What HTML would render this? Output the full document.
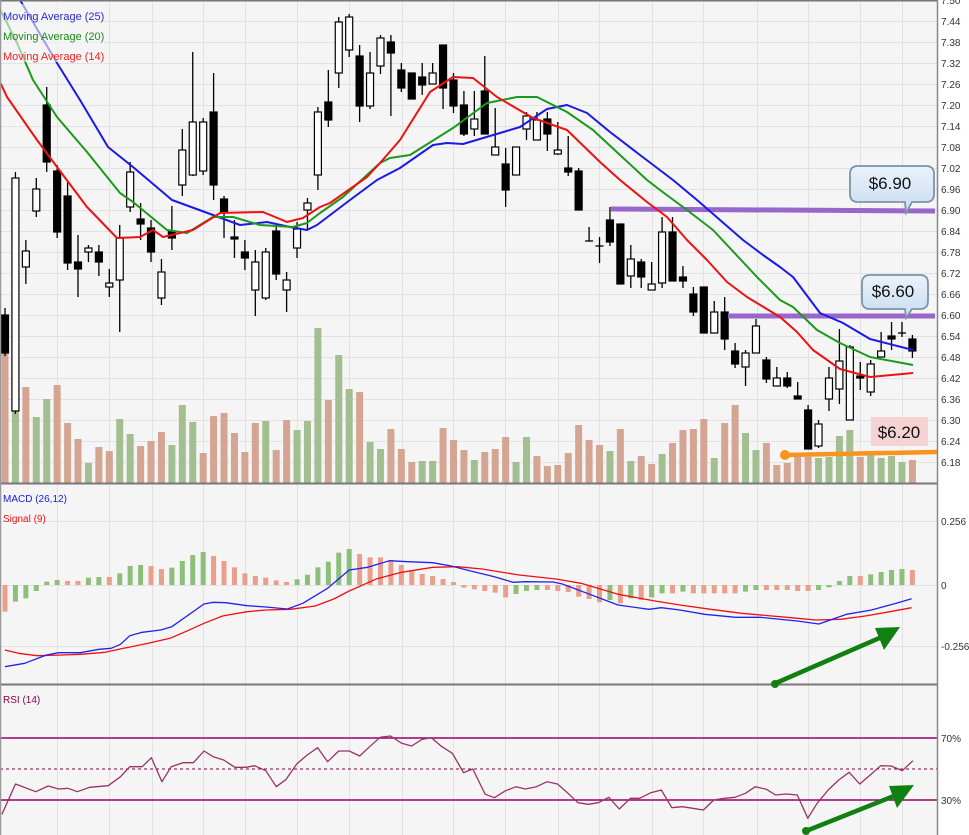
<!DOCTYPE html>
<html><head><meta charset="utf-8"><style>
html,body{margin:0;padding:0;background:#fff;}
svg{display:block;font-family:"Liberation Sans",sans-serif;}
</style></head><body>
<svg id="s" width="969" height="835" viewBox="0 0 969 835" xmlns="http://www.w3.org/2000/svg">
<defs>
<linearGradient id="cb" x1="0" y1="0" x2="0" y2="1"><stop offset="0" stop-color="#eaf2fb"/><stop offset="1" stop-color="#c9dcef"/></linearGradient>
</defs>
<rect x="0" y="0" width="969" height="835" fill="#ffffff"/>
<rect x="0" y="0" width="937" height="835" fill="#f5f5f5"/>
<g id="grid" stroke="#e2e2e2" stroke-width="1"></g>
<g id="vol"></g>
<g id="cand"></g>
<g id="ma" fill="none" stroke-width="2" stroke-linejoin="round"></g>
<g id="macd"></g>
<g id="rsi"></g>
<g id="lbl" font-size="10" fill="#333"></g>
</svg>
<script>
var NS="http://www.w3.org/2000/svg";
function el(p,t,a,txt){var e=document.createElementNS(NS,t);for(var k in a)e.setAttribute(k,a[k]);if(txt!=null)e.textContent=txt;document.getElementById(p).appendChild(e);return e;}
function X(i){return 5+i*10.43;}
var vx=[57,109,152,203,245,297,349,402,453,505,558,599,652,703,757,808,860,902];
vx.forEach(function(x){el('grid','line',{x1:x+.5,y1:0,x2:x+.5,y2:835});});
for(var k=0;k<=22;k++){var yy=462-k*21;el('grid','line',{x1:0,y1:yy+.5,x2:937,y2:yy+.5});
 var p=(6.18+k*0.06).toFixed(2);el('lbl','text',{x:941,y:yy+4},p);}
[521,585,646].forEach(function(y){el('grid','line',{x1:0,y1:y+.5,x2:937,y2:y+.5});});
var vt=[353,410,387,417,399,385,423,439,463,447,451,419,434,446,441,432,445,405,422,453,416,413,433,452,423,421,450,420,430,421,328,400,355,389,392,442,449,429,449,462,461,461,428,440,450,460,
452,449,437,462,437,456,466,465,453,425,440,445,451,429,461,456,464,454,443,430,429,419,458,423,405,433,450,443,465,463,457,457,458,457,436,430,457,455,458,456,462,460];
var vg=[0,1,0,1,1,0,0,0,1,0,0,1,1,0,0,0,1,1,1,0,0,0,0,0,0,1,0,0,1,1,1,0,1,1,0,1,1,0,0,0,1,1,0,0,0,1,
0,0,0,1,1,0,0,0,0,0,0,0,1,0,1,0,0,1,0,0,0,0,1,0,0,1,1,0,0,0,0,0,1,1,1,1,0,1,1,1,1,0];
for(var i=0;i<vt.length;i++){el('vol','rect',{x:X(i)-3.5,y:vt[i],width:7,height:483-vt[i],fill:vg[i]?'#a3bf92':'#d4a592'});}
var C=[[315,353,308,356,1],[178,411,172,414,0],[251,267,240,284,0],[189,211,178,217,0],[105,162,87,172,1],[171,232,165,238,1],[196,263,182,270,1],[262,269,235,297,1],[248,252,245,262,0],[252,262,245,276,1],
[283,287,269,297,0],[238,280,225,332,0],[172,207,162,212,0],[219,224,203,240,1],[228,252,220,262,1],[272,298,259,305,0],[231,238,206,250,1],[150,185,129,196,0],[122,175,52,176,0],[122,171,118,175,0],
[112,185,73,200,1],[199,212,196,238,1],[237,239,220,258,1],[252,258,240,270,1],[262,290,250,316,0],[252,298,248,300,0],[231,274,226,280,1],[280,290,272,312,0],[229,248,222,258,0],[203,210,198,230,0],
[112,175,107,190,0],[102,120,70,127,1],[22,73,17,88,0],[17,50,14,57,0],[56,106,45,122,1],[73,106,52,109,0],[38,66,35,74,0],[42,53,35,116,1],[70,88,63,92,1],[73,99,73,99,1],
[77,85,63,95,1],[73,84,63,84,0],[45,88,45,109,1],[80,106,73,113,1],[105,134,91,136,1],[119,129,91,136,0],[91,134,56,134,1],[147,155,108,155,0],[164,190,148,207,1],[147,175,147,175,0],
[116,129,112,140,0],[120,140,112,140,0],[119,134,112,151,1],[150,154,122,155,0],[168,172,136,176,1],[171,210,168,210,1],[241,241,227,241,2],[246,246,237,263,2],[220,242,207,246,1],[224,284,224,284,1],
[259,276,245,288,0],[262,277,259,288,1],[284,290,262,290,0],[232,283,217,288,0],[232,281,217,281,1],[277,281,266,288,1],[294,312,287,316,1],[287,333,287,333,1],[312,333,301,333,0],[312,339,297,350,1],
[351,364,343,368,1],[353,367,350,386,0],[326,353,319,353,0],[360,379,357,383,1],[378,386,367,386,0],[378,386,372,388,1],[396,399,382,399,1],[410,449,405,449,1],[424,446,420,448,0],[378,399,367,411,0],
[361,389,329,404,0],[347,420,345,420,0],[376,378,362,390,1],[364,392,360,396,0],[351,357,332,357,0],[336,339,322,350,1],[333,333,322,337,2],[339,351,335,358,1]];
for(var i=0;i<C.length;i++){var c=C[i],x=X(i);
 el('cand','line',{x1:x,y1:c[2],x2:x,y2:c[3],stroke:'#000','stroke-width':1.3});
 if(c[4]==2){el('cand','line',{x1:x-4,y1:c[0],x2:x+4,y2:c[0],stroke:'#000','stroke-width':1.3});}
 else el('cand','rect',{x:x-3.5,y:c[0],width:7,height:Math.max(2,c[1]-c[0]),fill:c[4]?'#000':'#fff',stroke:'#000','stroke-width':1.2});}
function pl(g,pts,col,w){var s=pts.map(function(p){return p[0]+','+p[1]}).join(' ');return el(g,'polyline',{points:s,stroke:col,'stroke-width':w,fill:'none','stroke-linejoin':'round'});}
pl('ma',[[20,0],[57,63],[80,100],[108,147],[133,167],[172,200],[213,215],[240,225],[267,222],[290,227],[307,230],[317,225],[350,200],[377,180],[400,168],[433,145],[447,143],[463,144],[500,133],[520,127],[547,109],[567,105],[587,113],[610,132],[640,155],[673,180],[697,200],[743,240],[763,255],[780,267],[793,277],[820,313],[843,323],[870,339],[913,350]],'#1a1ae6',2);
pl('ma',[[0,10],[3,15],[17,43],[33,80],[57,117],[87,152],[120,193],[133,202],[167,230],[187,233],[213,217],[233,217],[260,225],[293,227],[307,223],[320,213],[343,197],[380,163],[390,158],[410,155],[453,128],[487,103],[517,97],[537,97],[567,112],[593,130],[620,155],[647,180],[660,190],[687,210],[713,230],[757,277],[780,300],[793,307],[817,330],[840,343],[870,357],[913,365]],'#1a9a1a',2);
pl('ma',[[0,82],[7,97],[37,140],[57,167],[87,207],[117,238],[140,237],[153,230],[163,237],[193,230],[220,213],[263,212],[287,222],[303,218],[320,207],[330,203],[367,177],[380,163],[400,140],[430,92],[453,77],[473,78],[497,97],[533,118],[567,130],[600,162],[620,180],[647,202],[667,217],[687,240],[707,260],[727,282],[747,297],[780,317],[797,332],[813,350],[840,369],[870,377],[913,373]],'#ee1111',2);
el('ma','rect',{x:0,y:4,width:104,height:58,fill:'#f5f5f5','fill-opacity':0.6,stroke:'none'});
el('lbl','text',{x:3,y:20,'font-size':11,fill:'#2a2ad0'},'Moving Average (25)');
el('lbl','text',{x:3,y:40,'font-size':11,fill:'#1a8a1a'},'Moving Average (20)');
el('lbl','text',{x:3,y:60,'font-size':11,fill:'#ee2222'},'Moving Average (14)');
el('cand','line',{x1:611,y1:209,x2:935,y2:211,stroke:'#9966cc','stroke-width':5});
el('cand','line',{x1:728,y1:316,x2:935,y2:316,stroke:'#9966cc','stroke-width':5});
el('cand','line',{x1:785,y1:455,x2:937,y2:452,stroke:'#f7941d','stroke-width':4.5});
el('cand','circle',{cx:785,cy:455,r:5,fill:'#f7941d'});
el('cand','path',{d:'M858,166 H926 Q934,166 934,174 V194 Q934,202 926,202 H912 L906,213 L905,202 H858 Q850,202 850,194 V174 Q850,166 858,166Z',fill:'url(#cb)',stroke:'#7d93a8','stroke-width':1.8});
el('lbl','text',{x:890,y:189,'font-size':17,fill:'#111','text-anchor':'middle'},'$6.90');
el('cand','path',{d:'M870,275 H920 Q928,275 928,283 V301 Q928,309 920,309 H912 L906,318 L905,309 H870 Q862,309 862,301 V283 Q862,275 870,275Z',fill:'url(#cb)',stroke:'#7d93a8','stroke-width':1.8});
el('lbl','text',{x:893,y:297,'font-size':17,fill:'#111','text-anchor':'middle'},'$6.60');
el('cand','rect',{x:871,y:417,width:57,height:29,fill:'#f6d3d3'});
el('lbl','text',{x:899,y:438,'font-size':17,fill:'#111','text-anchor':'middle'},'$6.20');
var hz=[395,365,355,333,305,300,303,303,293,291,291,280,258,255,258,267,263,243,225,216,228,243,262,280,288,293,301,306,298,284,262,245,218,207,222,232,232,243,255,270,282,288,297,306,323,328,333,338,352,342,333,330,330,333,336,350,357,367,360,370,355,360,352,340,340,335,340,340,340,340,340,335,330,330,330,330,333,333,330,322,303,288,288,283,276,270,267,270];
for(var i=0;i<hz.length;i++){var by=480+hz[i]/3,bx=X(i);var prv=i?480+hz[i-1]/3:585;var gg=(by<prv);var yt=Math.min(by,585),hh=Math.abs(by-585);
 el('macd','rect',{x:bx-2.5,y:yt,width:5,height:Math.max(hh,1),fill:gg?'#8cc07a':'#e8a08c'});}
function tz(a){return a.map(function(p){return [(p[0]/1.618).toFixed(1),(480+p[1]/3).toFixed(1)];});}
pl('macd',tz([[8,510],[30,520],[60,527],[100,525],[130,523],[170,517],[200,505],[240,490],[275,475],[300,455],[330,430],[360,408],[400,395],[430,390],[470,388],[510,378],[540,357],[565,333],[610,296],[650,277],[700,262],[740,260],[780,267],[840,285],[900,297],[940,310],[1000,343],[1060,363],[1100,375],[1150,388],[1200,400],[1280,413],[1320,420],[1360,418],[1400,408],[1440,395],[1475,383]]),'#ee1111',1.3);
pl('macd',tz([[8,560],[40,550],[75,525],[95,518],[130,518],[160,508],[180,505],[195,493],[210,467],[230,457],[260,450],[278,440],[330,372],[345,367],[365,368],[400,377],[430,381],[465,387],[490,370],[530,325],[565,270],[595,262],[630,242],[660,245],[700,248],[730,258],[760,272],[800,290],[830,307],[850,305],[895,306],[910,312],[950,340],[1000,375],[1050,388],[1070,383],[1100,390],[1140,403],[1190,412],[1230,412],[1290,423],[1325,432],[1370,403],[1410,390],[1450,370],[1475,356]]),'#2222ee',1.3);
el('lbl','text',{x:3,y:502,'font-size':10,fill:'#1a1ae6'},'MACD (26,12)');
el('lbl','text',{x:3,y:522,'font-size':10,fill:'#ee1111'},'Signal (9)');
el('lbl','text',{x:941,y:525},'0.256');
el('lbl','text',{x:941,y:589},'0');
el('lbl','text',{x:941,y:650},'-0.256');
el('rsi','line',{x1:0,y1:738,x2:937,y2:738,stroke:'#990066','stroke-width':1.5});
el('rsi','line',{x1:0,y1:800,x2:937,y2:800,stroke:'#990066','stroke-width':1.5});
el('rsi','line',{x1:0,y1:769,x2:937,y2:769,stroke:'#880044','stroke-width':1,'stroke-dasharray':'3,3'});
pl('rsi',tz([[3,1003],[25,912],[58,935],[78,918],[95,927],[110,925],[125,935],[145,922],[175,917],[195,890],[210,860],[230,860],[245,833],[262,905],[277,860],[296,848],[313,848],[330,813],[345,830],[362,840],[380,862],[398,862],[412,857],[430,872],[447,920],[463,898],[480,852],[497,825],[514,803],[530,845],[548,813],[565,813],[582,828],[598,800],[615,772],[632,768],[650,790],[666,798],[683,778],[698,773],[715,800],[732,820],[750,878],[765,867],[785,943],[800,953],[818,932],[835,920],[850,927],[868,920],[885,905],[902,912],[918,938],[935,968],[952,973],[968,968],[985,952],[1002,987],[1020,955],[1035,955],[1053,938],[1070,930],[1087,983],[1104,980],[1121,985],[1138,990],[1155,960],[1172,955],[1189,952],[1206,940],[1222,920],[1240,928],[1255,945],[1272,942],[1290,945],[1307,1015],[1322,970],[1340,930],[1357,900],[1374,877],[1391,912],[1408,885],[1425,857],[1442,858],[1460,872],[1477,842]]),'#993366',1.3);
el('lbl','text',{x:3,y:703,'font-size':10,fill:'#880055'},'RSI (14)');
el('lbl','text',{x:941,y:742},'70%');
el('lbl','text',{x:941,y:804},'30%');
el('rsi','line',{x1:0,y1:483.5,x2:937,y2:483.5,stroke:'#777','stroke-width':2});
el('rsi','line',{x1:0,y1:684.5,x2:937,y2:684.5,stroke:'#777','stroke-width':2});
el('rsi','line',{x1:937.5,y1:0,x2:937.5,y2:835,stroke:'#888','stroke-width':1.5});
el('rsi','line',{x1:0,y1:0.5,x2:937,y2:0.5,stroke:'#777','stroke-width':2});
el('rsi','line',{x1:0.5,y1:0,x2:0.5,y2:835,stroke:'#999','stroke-width':1.5});
el('rsi','line',{x1:776,y1:683,x2:884,y2:636,stroke:'#108010','stroke-width':4.5,'stroke-linecap':'round'});
el('rsi','circle',{cx:775,cy:684,r:4,fill:'#108010'});
el('rsi','polygon',{points:'875,628 900,627 884,650',fill:'#108010'});
el('rsi','line',{x1:806,y1:831,x2:899,y2:794,stroke:'#108010','stroke-width':4.5,'stroke-linecap':'round'});
el('rsi','circle',{cx:806,cy:831,r:4,fill:'#108010'});
el('rsi','polygon',{points:'889,786 914,785 897,808',fill:'#108010'});
</script>
</body></html>
